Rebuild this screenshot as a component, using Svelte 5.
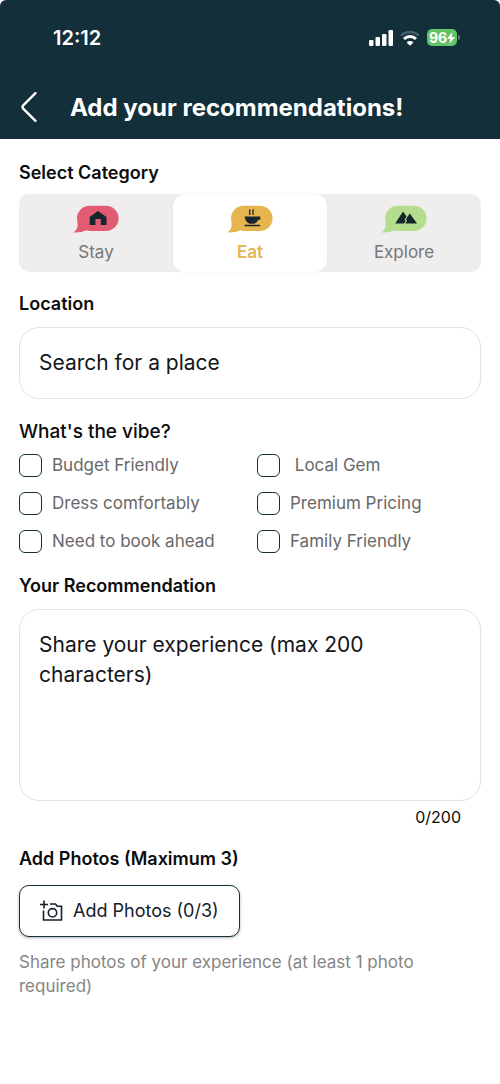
<script lang="ts">
  type Category = 'stay' | 'eat' | 'explore';

  const categories: { id: Category; label: string }[] = [
    { id: 'stay', label: 'Stay' },
    { id: 'eat', label: 'Eat' },
    { id: 'explore', label: 'Explore' }
  ];

  const maxLength = 200;
  const maxPhotos = 3;

  let selected = $state<Category>('eat');
  let place = $state('');
  let recommendation = $state('');
  let photoCount = $state(0);
  let vibes = $state([
    { label: 'Budget Friendly', checked: false },
    { label: '\u00a0Local Gem', checked: false },
    { label: 'Dress comfortably', checked: false },
    { label: 'Premium Pricing', checked: false },
    { label: 'Need to book ahead', checked: false },
    { label: 'Family Friendly', checked: false }
  ]);

  function addPhoto() {
    if (photoCount < maxPhotos) photoCount += 1;
  }
</script>

<div class="screen">
  <header class="header">
    <div class="status-bar">
      <span class="time">12:12</span>
      <div class="indicators">
        <svg width="24" height="16" viewBox="0 0 24 16" fill="#fff" aria-hidden="true">
          <rect x="0" y="10" width="4.5" height="6" rx="1.3" />
          <rect x="6.5" y="7" width="4.5" height="9" rx="1.3" />
          <rect x="13" y="4" width="4.5" height="12" rx="1.3" />
          <rect x="19.5" y="0" width="4.5" height="16" rx="1.3" />
        </svg>
        <svg width="20" height="16" viewBox="0 0 20 16" fill="none" stroke-width="2.6" aria-hidden="true">
          <path d="M1.2 5.6a12.6 12.6 0 0 1 17.6 0" stroke="#49616a" />
          <path d="M4 9a8.6 8.6 0 0 1 12 0" stroke="#fff" stroke-width="3" />
          <path d="M10 15.8 6.6 12.4a4.8 4.8 0 0 1 6.8 0z" fill="#fff" />
        </svg>
        <div class="battery">
          <span class="battery-level">
            96<svg width="8" height="12" viewBox="0 0 8 12" fill="#fff" aria-hidden="true">
              <path d="M5.4 0 0 6.8h3.4L2.4 12 8 5H4.6z" />
            </svg>
          </span>
          <span class="battery-cap"></span>
        </div>
      </div>
    </div>

    <div class="title-bar">
      <button class="back" aria-label="Back">
        <svg width="18" height="32" viewBox="0 0 18 32" fill="none" stroke="#fff" stroke-width="2.4" stroke-linecap="round" stroke-linejoin="round" aria-hidden="true">
          <path d="M15.5 2.2 3.2 14.4q-1.4 1.6 0 3.2l12.3 12.2" />
        </svg>
      </button>
      <h1>Add your recommendations!</h1>
    </div>
  </header>

  <main class="form">
    <h2>Select Category</h2>
    <div class="categories">
      {#each categories as category (category.id)}
        <button
          class="category {category.id}"
          class:active={selected === category.id}
          aria-pressed={selected === category.id}
          onclick={() => (selected = category.id)}
        >
          <svg width="46" height="28" viewBox="0 0 46 28" aria-hidden="true">
            <path fill="currentColor" d="M16.5.8H33a12.6 12.6 0 0 1 0 25.2H16.5q-1.6 0-3-.8Q7.5 28 .5 27.4 4.700 24.400 4.700 19.500L4 13.400A12.600 12.600 0 0 1 16.500.8z" />
            {#if category.id === 'stay'}
              <path fill="#16252e" d="M25 6 33.500 12v8h-5.700v-5.200q0-.8-.8-.8h-3.800q-.8 0-.8.8V20h-5.700v-8z" />
            {:else if category.id === 'eat'}
              <path fill="#16252e" d="M17.500 11.500h15.800v3.200h-2.100q-.8 3-4 4h-4.400q-3.600-1.200-4.400-4.500zM17.500 19.700h15.600v1.600H17.500z" />
              <path fill="none" stroke="#16252e" stroke-width="1.300" d="M23.300 4.500q-1.300 1.300-.6 2.600t-.4 2.700M26.600 4.500q-1.300 1.300-.6 2.600t-.4 2.700" />
            {:else}
              <path fill="#16252e" d="M14.200 18.500 22 6.600l3.500 5-2 2.800 1.200 1.600-1.600 2.500zM24.400 18.500l1.700-2.800-1.300-1.500L28.800 8.500l7.200 10z" />
            {/if}
          </svg>
          <span>{category.label}</span>
        </button>
      {/each}
    </div>

    <label class="heading" for="place">Location</label>
    <input id="place" class="field" type="text" placeholder="Search for a place" bind:value={place} />

    <fieldset class="vibes">
      <legend>What's the vibe?</legend>
      {#each vibes as vibe (vibe.label)}
        <label class="vibe">
          <input type="checkbox" bind:checked={vibe.checked} />
          <span>{vibe.label}</span>
        </label>
      {/each}
    </fieldset>

    <label class="heading" for="recommendation">Your Recommendation</label>
    <textarea
      id="recommendation"
      class="field"
      rows="5"
      maxlength={maxLength}
      placeholder="Share your experience (max 200 characters)"
      bind:value={recommendation}
    ></textarea>
    <p class="counter">{recommendation.length}/{maxLength}</p>

    <h2 class="photos-title">Add Photos (Maximum {maxPhotos})</h2>
    <button class="add-photos" onclick={addPhoto}>
      <svg width="23" height="22" viewBox="0 0 23 22" fill="none" stroke="#14202b" stroke-width="1.6" aria-hidden="true">
        <path d="M4 .5v8M0 4.500h8M10 4h5.500l1.800 2.200H21.500V20H3.500V10.500" />
        <circle cx="12.5" cy="12.8" r="4.2" />
      </svg>
      <span>Add Photos ({photoCount}/{maxPhotos})</span>
    </button>
    <p class="hint">Share photos of your experience (at least 1 photo required)</p>
  </main>
</div>

<style>
  :global(body) {
    margin: 0;
    background: #fff;
  }

  .screen {
    font-family: Inter, 'Liberation Sans', sans-serif;
    color: #0c0c0c;
  }

  button,
  input,
  textarea {
    font: inherit;
    box-sizing: border-box;
  }

  button {
    padding: 0;
    border: 0;
    background: none;
    cursor: pointer;
  }

  svg {
    display: block;
    flex: none;
  }

  .header {
    background: #132f3a;
    color: #fff;
    border-radius: 6px 6px 0 0;
  }

  .status-bar {
    display: flex;
    justify-content: space-between;
    align-items: center;
    height: 75px;
    padding: 0 40px 0 53px;
  }

  .time {
    font-size: 20px;
    font-weight: 600;
  }

  .indicators {
    display: flex;
    align-items: center;
    gap: 7px;
  }

  .battery {
    display: flex;
    align-items: center;
    gap: 1px;
  }

  .battery-level {
    display: flex;
    align-items: center;
    justify-content: center;
    width: 30px;
    height: 17px;
    border-radius: 5px;
    background: #63c466;
    font-size: 14px;
    font-weight: 700;
  }

  .battery-cap {
    width: 2px;
    height: 5px;
    border-radius: 0 2px 2px 0;
    background: #5b7078;
  }

  .title-bar {
    display: flex;
    align-items: center;
    gap: 32px;
    height: 64px;
    padding: 0 20px;
  }

  h1 {
    margin: 0;
    font-size: 24px;
    font-weight: 700;
  }

  .form {
    display: flex;
    flex-direction: column;
    padding: 22px 19px;
  }

  h2,
  .heading,
  legend {
    margin: 0;
    padding: 0;
    font-size: 18px;
    font-weight: 600;
    line-height: 24px;
  }

  .categories {
    display: flex;
    margin: 9px 0 20px;
    border-radius: 10px;
    background: #efedee;
  }

  .category {
    flex: 1;
    display: flex;
    flex-direction: column;
    align-items: center;
    gap: 7px;
    height: 78px;
    padding-top: 11px;
    border-radius: 12px;
    font-size: 17px;
    line-height: 24px;
  }

  .category span {
    color: #777;
  }

  .category.active {
    background: #fff;
    box-shadow: 0 0 3px rgba(0, 0, 0, 0.06);
    font-weight: 600;
  }

  .category.active span {
    color: inherit;
  }

  .stay {
    color: #e15b73;
  }

  .eat {
    color: #e7b550;
  }

  .explore {
    color: #b4de8d;
  }

  .field {
    width: 100%;
    padding: 20px 19px;
    margin: 11px 0 0;
    border: 1px solid #e2e2e2;
    border-radius: 20px;
    background: #fff;
    color: #0c0c0c;
    font-size: 21px;
    line-height: 30px;
    outline: none;
    resize: none;
  }

  .field::placeholder {
    color: #14161a;
    opacity: 1;
  }

  .field:focus {
    border-color: #132f3a;
  }

  .vibes {
    display: grid;
    grid-template-columns: 1fr 1fr;
    gap: 14px;
    min-width: 0;
    margin: 21px 0;
    padding: 0;
    border: 0;
  }

  legend {
    margin-bottom: 9px;
    font-size: 19px;
    font-weight: 500;
  }

  .vibe {
    display: flex;
    align-items: center;
    gap: 10px;
    color: #686868;
    font-size: 17px;
    line-height: 24px;
  }

  .vibe input {
    appearance: none;
    width: 23px;
    height: 23px;
    margin: 0;
    border: 1px solid #132f3a;
    border-radius: 6px;
  }

  .vibe input:checked {
    background: #132f3a;
    box-shadow: inset 0 0 0 4px #fff;
  }

  .counter {
    margin: 4px 20px 0 0;
    font-size: 16px;
    line-height: 24px;
    text-align: right;
  }

  .photos-title {
    margin-top: 18px;
  }

  .add-photos {
    display: flex;
    align-items: center;
    align-self: flex-start;
    gap: 10px;
    margin: 14px 0 13px;
    padding: 12px 20px;
    border: 1px solid #132f3a;
    border-radius: 10px;
    background: #fff;
    box-shadow: 0 1px 3px rgba(0, 0, 0, 0.3);
    color: #14202b;
    font-size: 18px;
    line-height: 26px;
  }

  .hint {
    margin: 0;
    color: #858585;
    font-size: 17px;
    line-height: 24px;
  }
</style>
